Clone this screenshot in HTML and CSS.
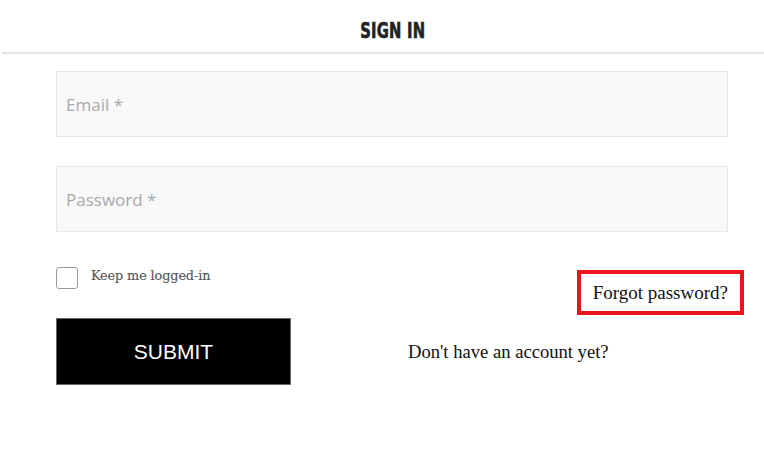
FILE: index.html
```html
<!DOCTYPE html>
<html>
<head>
<meta charset="utf-8">
<link rel="stylesheet" href="styles.css">
</head>
<body>
<div class="page">
  <header class="head"><h1 class="title">SIGN IN</h1></header>
  <form class="form">
    <div class="field"><input class="input" type="text" placeholder="Email *"></div>
    <div class="field"><input class="input" type="password" placeholder="Password *"></div>
    <div class="row opts">
      <label class="keep"><span class="box"></span><span class="keep-text">Keep me logged-in</span></label>
      <a class="forgot">Forgot password?</a>
    </div>
    <div class="row actions">
      <button class="submit" type="button">SUBMIT</button>
      <span class="noacc">Don't have an account yet?</span>
    </div>
  </form>
</div>
</body>
</html>
```
FILE: styles.css
```css
* { box-sizing: border-box; }
html, body { margin: 0; padding: 0; background: #fff; }
.page { width: 764px; height: 452px; }
.head { margin-left: 2px; border-bottom: 2px solid #e4e4e4; height: 54px; display: flex; justify-content: center; padding-top: 19px; }
.title { margin: 0 0 0 20px; font-family: "DejaVu Sans Condensed", "DejaVu Sans", sans-serif; font-weight: bold; font-size: 21px; line-height: 24px; color: #222; letter-spacing: 0.3px; transform: scaleX(0.78); -webkit-text-stroke: 0.6px #222; }
.form { padding: 17px 36px 0 56px; }
.field { margin-bottom: 29px; }
.input { display: block; width: 672px; height: 66px; background: #f8f8f8; border: 1.5px solid #e8e8e8; padding: 0 9px; font-family: "Open Sans", sans-serif; font-size: 17px; color: #333; outline: none; }
.input::placeholder { color: #a9a9ae; }
.row { display: flex; }
.opts { margin-top: 7px; justify-content: space-between; align-items: flex-start; width: 688px; }
.keep { display: flex; align-items: center; gap: 13px; padding-top: 6px; }
.box { width: 22px; height: 22px; border: 1.5px solid #9a9aa8; border-radius: 3px; }
.keep-text { font-family: "DejaVu Serif", serif; font-size: 12.8px; color: #555; margin-top: -5px; letter-spacing: -0.1px; -webkit-text-stroke: 0.15px #555; }
.forgot { margin-top: 9px; border: 4px solid #e8141e; padding: 8px 12px 7px 12px; font-family: "Liberation Serif", serif; font-size: 19px; line-height: 22px; color: #111; }
.actions { margin-top: 3px; align-items: center; }
.submit { width: 235px; height: 67px; background: #000; border: 1px solid #666; color: #fff; font-family: "Liberation Sans", sans-serif; font-size: 21px; padding: 0; }
.noacc { margin-left: 117px; font-family: "Liberation Serif", serif; font-size: 18.6px; color: #111; }
```
